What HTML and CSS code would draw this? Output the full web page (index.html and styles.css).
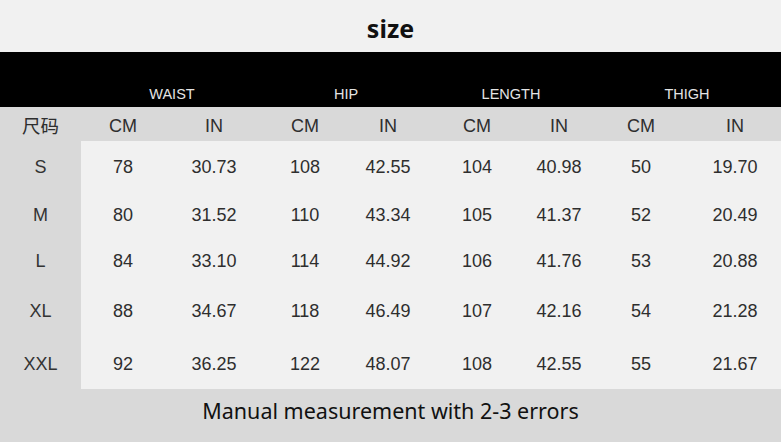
FILE: index.html
```html
<!DOCTYPE html>
<html>
<head>
<meta charset="utf-8">
<link rel="stylesheet" href="styles.css">
</head>
<body>
<div class="page">
  <div class="title">size</div>
  <div class="band">
    <div class="group g1">WAIST</div>
    <div class="group g2">HIP</div>
    <div class="group g3">LENGTH</div>
    <div class="group g4">THIGH</div>
  </div>
  <div class="row head">
    <div class="cell size cjk">尺码</div>
    <div class="cell">CM</div><div class="cell">IN</div>
    <div class="cell">CM</div><div class="cell">IN</div>
    <div class="cell">CM</div><div class="cell">IN</div>
    <div class="cell">CM</div><div class="cell">IN</div>
  </div>
  <div class="row data r1">
    <div class="cell size">S</div>
    <div class="cell">78</div><div class="cell">30.73</div>
    <div class="cell">108</div><div class="cell">42.55</div>
    <div class="cell">104</div><div class="cell">40.98</div>
    <div class="cell">50</div><div class="cell">19.70</div>
  </div>
  <div class="row data r2">
    <div class="cell size">M</div>
    <div class="cell">80</div><div class="cell">31.52</div>
    <div class="cell">110</div><div class="cell">43.34</div>
    <div class="cell">105</div><div class="cell">41.37</div>
    <div class="cell">52</div><div class="cell">20.49</div>
  </div>
  <div class="row data r3">
    <div class="cell size">L</div>
    <div class="cell">84</div><div class="cell">33.10</div>
    <div class="cell">114</div><div class="cell">44.92</div>
    <div class="cell">106</div><div class="cell">41.76</div>
    <div class="cell">53</div><div class="cell">20.88</div>
  </div>
  <div class="row data r4">
    <div class="cell size">XL</div>
    <div class="cell">88</div><div class="cell">34.67</div>
    <div class="cell">118</div><div class="cell">46.49</div>
    <div class="cell">107</div><div class="cell">42.16</div>
    <div class="cell">54</div><div class="cell">21.28</div>
  </div>
  <div class="row data r5">
    <div class="cell size">XXL</div>
    <div class="cell">92</div><div class="cell">36.25</div>
    <div class="cell">122</div><div class="cell">48.07</div>
    <div class="cell">108</div><div class="cell">42.55</div>
    <div class="cell">55</div><div class="cell">21.67</div>
  </div>
  <div class="footer">Manual measurement with 2-3 errors</div>
</div>
</body>
</html>
```
FILE: styles.css
```css
html, body {
  margin: 0;
  padding: 0;
  background: #f1f1f1;
}
.page {
  width: 781px;
  height: 442px;
  overflow: hidden;
  display: flex;
  flex-direction: column;
}
.title {
  height: 52px;
  line-height: 52px;
  padding-top: 2px;
  box-sizing: border-box;
  text-align: center;
  font-family: "Noto Sans", sans-serif;
  font-weight: 700;
  font-size: 25px;
  color: #111;
  background: #f1f1f1;
}
.band {
  height: 55px;
  background: #000;
  display: grid;
  grid-template-columns: 81px 182px 166px 164px 188px;
  align-items: end;
  padding-bottom: 3px;
  box-sizing: border-box;
}
.group {
  font-family: "Liberation Sans", Arial, sans-serif;
  font-size: 14.5px;
  color: #e4e4e4;
  text-align: center;
  line-height: 20px;
}
.g1 { grid-column: 2; }
.g2 { grid-column: 3; }
.g3 { grid-column: 4; }
.g4 { grid-column: 5; }
.row {
  display: grid;
  grid-template-columns: 81px 84px 98px 84px 82px 96px 68px 96px 92px;
  align-items: stretch;
  font-family: "Liberation Sans", Arial, sans-serif;
  font-size: 18px;
  color: #2e2e2e;
}
.cell {
  display: flex;
  align-items: center;
  justify-content: center;
  box-sizing: border-box;
}
.head {
  height: 34px;
  background: #d9d9d9;
  color: #2e2e2e;
}
.head .cell {
  padding-top: 5px;
}
.head .cjk {
  padding-top: 2px;
  font-family: "Noto Sans CJK SC", sans-serif;
  font-size: 18.5px;
}
.data {
  background: #f1f1f1;
}
.data .cell {
  padding-top: 3px;
}
.data .size {
  background: #d9d9d9;
  color: #333;
}
.r1 { height: 49px; }
.r2 { height: 47px; }
.r3 { height: 45px; }
.r4 { height: 55px; }
.r5 { height: 52px; }
.footer {
  flex: 1;
  background: #d9d9d9;
  font-family: "Noto Sans", sans-serif;
  font-size: 21.5px;
  color: #111;
  text-align: center;
  line-height: 44px;
}
```
